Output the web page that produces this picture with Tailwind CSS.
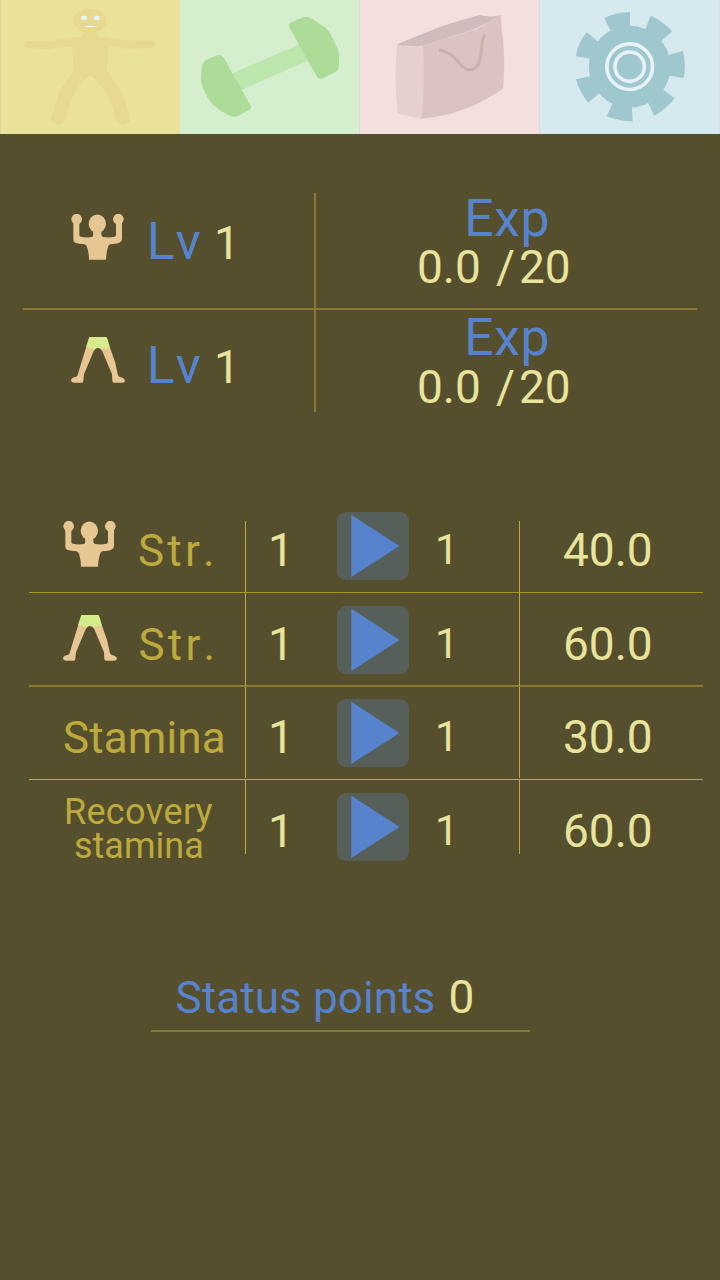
<!DOCTYPE html>
<html lang="en">
<head>
<meta charset="utf-8">
<title>Status</title>
<script src="https://cdn.jsdelivr.net/npm/@tailwindcss/browser@4"></script>
</head>
<body class="bg-[#564f2e]">
<svg class="hidden">
  <symbol id="arms" viewBox="153 72 162 138">
    <g fill="#e6c692">
      <circle cx="170" cy="87.500" r="16"/><circle cx="295" cy="87.500" r="16"/>
      <ellipse cx="232" cy="101" rx="26" ry="27.500"/>
      <path d="M160 96V149Q160 157 168 159Q176 162 194 163Q200 165 202 174Q207 190 207 209H258Q259 190 263 174Q265 165 271 163Q290 161 298 158Q306 155 306 147V96H288V134Q288 140 283 140Q268 144 249 141Q243 139 244 125H219Q221 139 216 141Q198 144 183 140Q178 140 178 134V96Z"/>
    </g>
  </symbol>
  <symbol id="legs" viewBox="151 441 162 138">
    <path fill="#e6c692" d="M197 470L180 525L170 558Q168 561 161 562Q151 565 151 571Q152 578 160 578H184Q188 578 188 573L190 553L219 484Q226 473 232 474Q239 474 245 484L274 553L275 573Q276 578 280 578H304Q312 578 313 572Q311 564 300 562Q294 560 292 556L283 515L267 470Z"/>
    <path fill="#d5ec8c" d="M206 441H257L261 448L268 473Q253 476 242 476Q232 470 222 476Q209 476 196 471L204 446Z"/>
  </symbol>
  <symbol id="play" viewBox="0 0 72 68">
    <rect width="72" height="68" rx="9" fill="#575f5b"/>
    <path fill="#5782cc" d="M14.300 2.700V65L62.500 34Z"/>
  </symbol>
</svg>
<main class="flex h-[1280px] w-[720px] flex-col overflow-hidden bg-[#564f2e] font-['Roboto',sans-serif] whitespace-nowrap text-[#e7e39b] [font-kerning:none]">
  <nav class="grid h-[134px] grid-cols-4">
    <svg class="h-[134px] w-[180px] bg-[#eae298]" viewBox="0 0 540 402">
      <path fill="#d9d5a0" d="M0 0H3V402H0Z"/>
      <g fill="#e8d990">
        <ellipse cx="270" cy="62" rx="49" ry="36"/>
        <path d="M252 90Q256 110 238 111Q200 114 150 122L85 123Q73 125 73 134Q74 144 86 145L140 148L205 140Q215 138 216 152L221 212L192 254Q176 275 170 300L153 354Q152 372 175 373Q194 373 197 358Q207 310 220 285Q234 260 259 233Q270 222 281 233Q315 270 326 290Q338 325 347 360Q351 373 370 373Q390 372 391 354L369 282L320 210L325 150Q326 138 338 141Q370 147 400 146L455 144Q468 143 468 132Q467 122 455 122Q410 122 380 120Q345 115 305 111Q285 110 289 90Z"/>
      </g>
      <g fill="#e6f2f3"><rect x="243" y="47" width="18" height="13" rx="5"/><rect x="281" y="47" width="18" height="13" rx="5"/><path d="M250 80Q271 74 293 80Q271 83 250 80Z"/></g>
    </svg>
    <svg class="h-[134px] w-[180px] bg-[#d5eece]" viewBox="0 0 540 402">
      <path fill="#bce6ac" d="M155 221L360 132L386 181L183 270Z"/>
      <g fill="#acdc98">
        <path d="M72 185Q77 179 112 166Q124 162 131 173L212 317Q216 325 207 330L175 347Q162 353 149 347Q120 334 97 313Q83 295 69 264Q61 247 64 220Q66 190 72 185Z"/>
        <path d="M329 84Q323 72 334 67Q350 60 364 54Q380 48 393 55L438 84Q450 95 463 125Q480 155 477 175V198Q476 211 465 217L428 235Q417 239 411 230Z"/>
      </g>
      <path fill="#d5dcc6" d="M537.500 0H540V402H537.500Z"/>
    </svg>
    <svg class="h-[134px] w-[180px] bg-[#f3dfde]" viewBox="0 0 540 402">
      <path fill="#e5d0cf" d="M111 133L190 138Q194 250 183 356L112 340Q102 240 111 133Z"/>
      <path fill="#dbc3c3" d="M189 137L350 87L422 46Q425 90 431 140Q435 200 429 266Q390 292 345 315Q270 349 183 356Q195 250 189 137Z"/>
      <path fill="#d0bcbd" d="M111 133L240 80Q290 64 360 45Q390 53 422 46Q370 77 330 92L189 137Q140 140 111 133Z"/>
      <path fill="none" stroke="#cab3af" stroke-width="9" stroke-linecap="round" d="M241 151C292 158 296 209 329 209C377 204 354 142 373 108"/>
      <path fill="#e0d6da" d="M537.500 0H540V402H537.500Z"/>
    </svg>
    <svg class="h-[134px] w-[180px] bg-[#d6e9ef]" viewBox="0 0 540 402">
      <g fill="#9fc7ce">
        <circle cx="269" cy="200" r="122.500"/>
        <path d="M193 54Q228 36 270 36V90L215 99Z"/>
        <path d="M332 47Q368 62 396 94L358 128L312 98Z"/>
        <path d="M429 153Q439 193 431 234L382 226V166Z"/>
        <path d="M404 295Q379 328 343 347L320 300L365 266Z"/>
        <path d="M278 364Q236 364 200 349L220 305L275 310Z"/>
        <path d="M145 308Q118 276 108 238L155 228L182 276Z"/>
        <path d="M107 169Q115 127 140 97L180 129L155 177Z"/>
      </g>
      <g fill="none" stroke="#e7f2f6" stroke-width="11"><circle cx="269" cy="200" r="68.500"/><circle cx="269" cy="200" r="44"/></g>
      <path fill="#dcdfe4" d="M537.500 0H540V402H537.500Z"/>
    </svg>
  </nav>

  <section class="mt-[59px] ml-[23px] w-[674px]">
    <div class="flex h-[117px] border-b-2 border-[#8a7a33]">
      <div class="flex w-[293px] items-start border-r-2 border-[#8a7a33] pl-12">
        <svg class="mt-[21px] h-[46px] w-[54px]"><use href="#arms"/></svg>
        <p class="mt-[23px] ml-[21.500px] flex items-baseline text-[46px] leading-none"><span class="w-[67.500px] text-[52px] tracking-[1px] text-[#5782cc]">Lv</span>1</p>
      </div>
      <div class="flex flex-col gap-px pt-0.5">
        <p class="pl-[148px] text-[52px] leading-[48px] tracking-[0.4px] text-[#5782cc]">Exp</p>
        <p class="flex pl-[101px] text-[46px] leading-none"><span class="w-[79px]">0.0</span><span class="w-[23px]">/</span><span>20</span></p>
      </div>
    </div>
    <div class="flex h-[102px]">
      <div class="flex w-[293px] items-start border-r-2 border-[#8a7a33] pl-12">
        <svg class="mt-[27px] h-[46px] w-[54px]"><use href="#legs"/></svg>
        <p class="mt-[30px] ml-[21.500px] flex items-baseline text-[46px] leading-none"><span class="w-[67.500px] text-[52px] tracking-[1px] text-[#5782cc]">Lv</span>1</p>
      </div>
      <div class="flex flex-col gap-0.5 pt-1">
        <p class="pl-[148px] text-[52px] leading-[48px] tracking-[0.4px] text-[#5782cc]">Exp</p>
        <p class="flex pl-[101px] text-[46px] leading-none"><span class="w-[79px]">0.0</span><span class="w-[23px]">/</span><span>20</span></p>
      </div>
    </div>
  </section>

  <section class="mt-[100px] ml-[29px] w-[674px] text-[46px] leading-none">
    <div class="flex h-[80px]">
      <div class="flex w-[216px] items-start pl-[33.500px]">
        <svg class="mt-[9px] h-[46px] w-[54px]"><use href="#arms"/></svg>
        <p class="mt-[17px] ml-[21.500px] text-[44px] leading-none tracking-[3.2px] text-[#bcab3c]">Str.</p>
      </div>
      <div class="mt-[9px] w-px bg-[#bda944]"></div>
      <div class="flex w-[273px] items-start pl-[22px]">
        <span class="mt-[15px] w-[68.500px]">1</span>
        <svg class="h-[68px] w-[72px]"><use href="#play"/></svg>
        <span class="mt-[17px] ml-[26.500px] text-[42px] leading-none">1</span>
      </div>
      <div class="mt-[9px] w-px bg-[#bda944]"></div>
      <p class="pt-[15px] pl-[43px]">40.0</p>
    </div>
    <div class="flex h-[94px] border-t border-[#a9952f]">
      <div class="flex w-[216px] items-start pt-3 pl-[33.500px]">
        <svg class="mt-[9.500px] h-[46px] w-[54px]"><use href="#legs"/></svg>
        <p class="mt-[18px] ml-[22px] text-[44px] leading-none tracking-[3.2px] text-[#bcab3c]">Str.</p>
      </div>
      <div class="w-px bg-[#bda944]"></div>
      <div class="flex w-[273px] items-start pt-[12.750px] pl-[22px]">
        <span class="mt-[15.250px] w-[68.500px]">1</span>
        <svg class="h-[68px] w-[72px]"><use href="#play"/></svg>
        <span class="mt-[17.250px] ml-[26.500px] text-[42px] leading-none">1</span>
      </div>
      <div class="w-px bg-[#bda944]"></div>
      <p class="pt-[28px] pl-[43px]">60.0</p>
    </div>
    <div class="flex h-[93px] border-t-2 border-[#8a7a33] -mt-px">
      <div class="w-[216px] pt-[29px] pl-[34px]">
        <p class="text-[44px] leading-none tracking-[0.1px] text-[#bcab3c]">Stamina</p>
      </div>
      <div class="w-px bg-[#bda944]"></div>
      <div class="flex w-[273px] items-start pt-3 pl-[22px]">
        <span class="mt-[15px] w-[68.500px]">1</span>
        <svg class="h-[68px] w-[72px]"><use href="#play"/></svg>
        <span class="mt-[17px] ml-[26.500px] text-[42px] leading-none">1</span>
      </div>
      <div class="w-px bg-[#bda944]"></div>
      <p class="pt-[27px] pl-[43px]">30.0</p>
    </div>
    <div class="flex h-[83px] border-t border-[#bda944] mt-px">
      <div class="w-[216px] pt-[15px] pl-[35px] text-[36px] leading-[34px] tracking-[0.3px] text-[#bcab3c]">
        <p>Recovery</p>
        <p class="pl-[10px] tracking-normal">stamina</p>
      </div>
      <div class="mb-2 w-px bg-[#bda944]"></div>
      <div class="flex w-[273px] items-start pt-[13px] pl-[22px]">
        <span class="mt-[15px] w-[68.500px]">1</span>
        <svg class="h-[68px] w-[72px]"><use href="#play"/></svg>
        <span class="mt-[17px] ml-[26.500px] text-[42px] leading-none">1</span>
      </div>
      <div class="mb-2 w-px bg-[#bda944]"></div>
      <p class="pt-[28px] pl-[43px]">60.0</p>
    </div>
  </section>

  <footer class="mt-[112px] ml-[150.500px] flex h-[58px] w-[379.500px] items-baseline border-b-2 border-[#8a7a33] pl-[25px] text-[46px] leading-none">
    <span class="w-[273px] text-[44px] leading-none tracking-[0.1px] text-[#5782cc]">Status points</span><span>0</span>
  </footer>
</main>
</body>
</html>
